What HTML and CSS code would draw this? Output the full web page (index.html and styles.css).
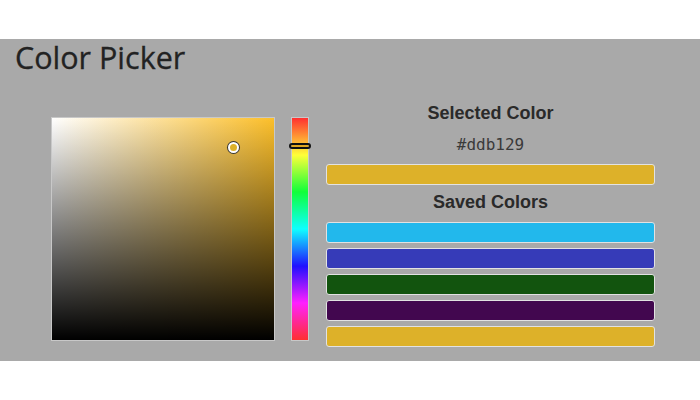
FILE: index.html
```
<!DOCTYPE html>
<html>
<head>
<meta charset="utf-8">
<link rel="stylesheet" href="styles.css">
</head>
<body>
<div class="app">
  <h1 class="title">Color Picker</h1>
  <div class="picker">
    <div class="sv">
      <div class="sv-marker" style="left: 181px; top: 29px;"></div>
    </div>
    <div class="hue">
      <div class="hue-marker" style="top: 25px;"></div>
    </div>
    <div class="panel">
      <h2 class="heading">Selected Color</h2>
      <div class="hex">#ddb129</div>
      <div class="swatch selected" style="background: #ddb129;"></div>
      <h2 class="heading saved-heading">Saved Colors</h2>
      <div class="saved">
        <div class="swatch" style="background: #22b8ec;"></div>
        <div class="swatch" style="background: #363bb8;"></div>
        <div class="swatch" style="background: #12540e;"></div>
        <div class="swatch" style="background: #42074f;"></div>
        <div class="swatch" style="background: #ddb129;"></div>
      </div>
    </div>
  </div>
</div>
</body>
</html>
```
FILE: styles.css
```
* { box-sizing: border-box; }
html, body { margin: 0; padding: 0; background: #fff; }
body { padding-top: 39px; }
.app {
  background: #a9a9a9;
  height: 322px;
  padding: 2px 0 14px 0;
}
.title {
  margin: 0;
  padding-left: 15px;
  font-family: "Open Sans", sans-serif;
  font-weight: 500;
  font-size: 30.5px;
  line-height: 32px;
  color: #222;
  -webkit-text-stroke: 0.3px #222;
}
.picker {
  display: flex;
  align-items: flex-start;
  margin-top: 27px;
  padding-left: 51px;
}
.sv {
  position: relative;
  width: 224px;
  height: 224px;
  margin-top: 17px;
  border: 1px solid #c8c8c8;
  background:
    linear-gradient(to top, #000, rgba(0,0,0,0)),
    linear-gradient(to right, #fff, #fcbf2a);
}
.sv-marker {
  position: absolute;
  width: 11px;
  height: 11px;
  margin: -5px 0 0 -5px;
  border-radius: 50%;
  background: #ddb129;
  border: 2px solid #fff;
  box-shadow: 0 0 0 1px #333;
}
.hue {
  position: relative;
  width: 18px;
  height: 224px;
  margin-top: 17px;
  margin-left: 16px;
  border: 1px solid #c8c8c8;
  background: linear-gradient(to bottom, #ff3030 0%, #ffff38 16.7%, #10ff3a 33.3%, #10ffff 50%, #2010ff 66.7%, #ff20ff 83.3%, #ff3030 100%);
}
.hue-marker {
  position: absolute;
  left: -3px;
  right: -3px;
  height: 6px;
  border: 2px solid #111;
  border-radius: 3px;
  background: rgba(200,140,20,0.6);
}
.panel {
  width: 329px;
  margin-left: 17px;
  display: flex;
  flex-direction: column;
}
.heading {
  margin: 0;
  text-align: center;
  font-family: "Liberation Sans", Arial, sans-serif;
  font-weight: 700;
  font-size: 18px;
  line-height: 26px;
  color: #2a2a2a;
}
.hex {
  margin-top: 8px;
  text-align: center;
  font-family: "DejaVu Sans Mono", monospace;
  font-size: 16px;
  line-height: 22px;
  color: #3a3a3a;
}
.swatch {
  height: 21px;
  border: 1px solid #e2e2e2;
  border-radius: 3px;
}
.selected { margin-top: 8px; }
.saved-heading { margin-top: 4px; }
.saved {
  margin-top: 7px;
  display: flex;
  flex-direction: column;
  gap: 5px;
}
```
